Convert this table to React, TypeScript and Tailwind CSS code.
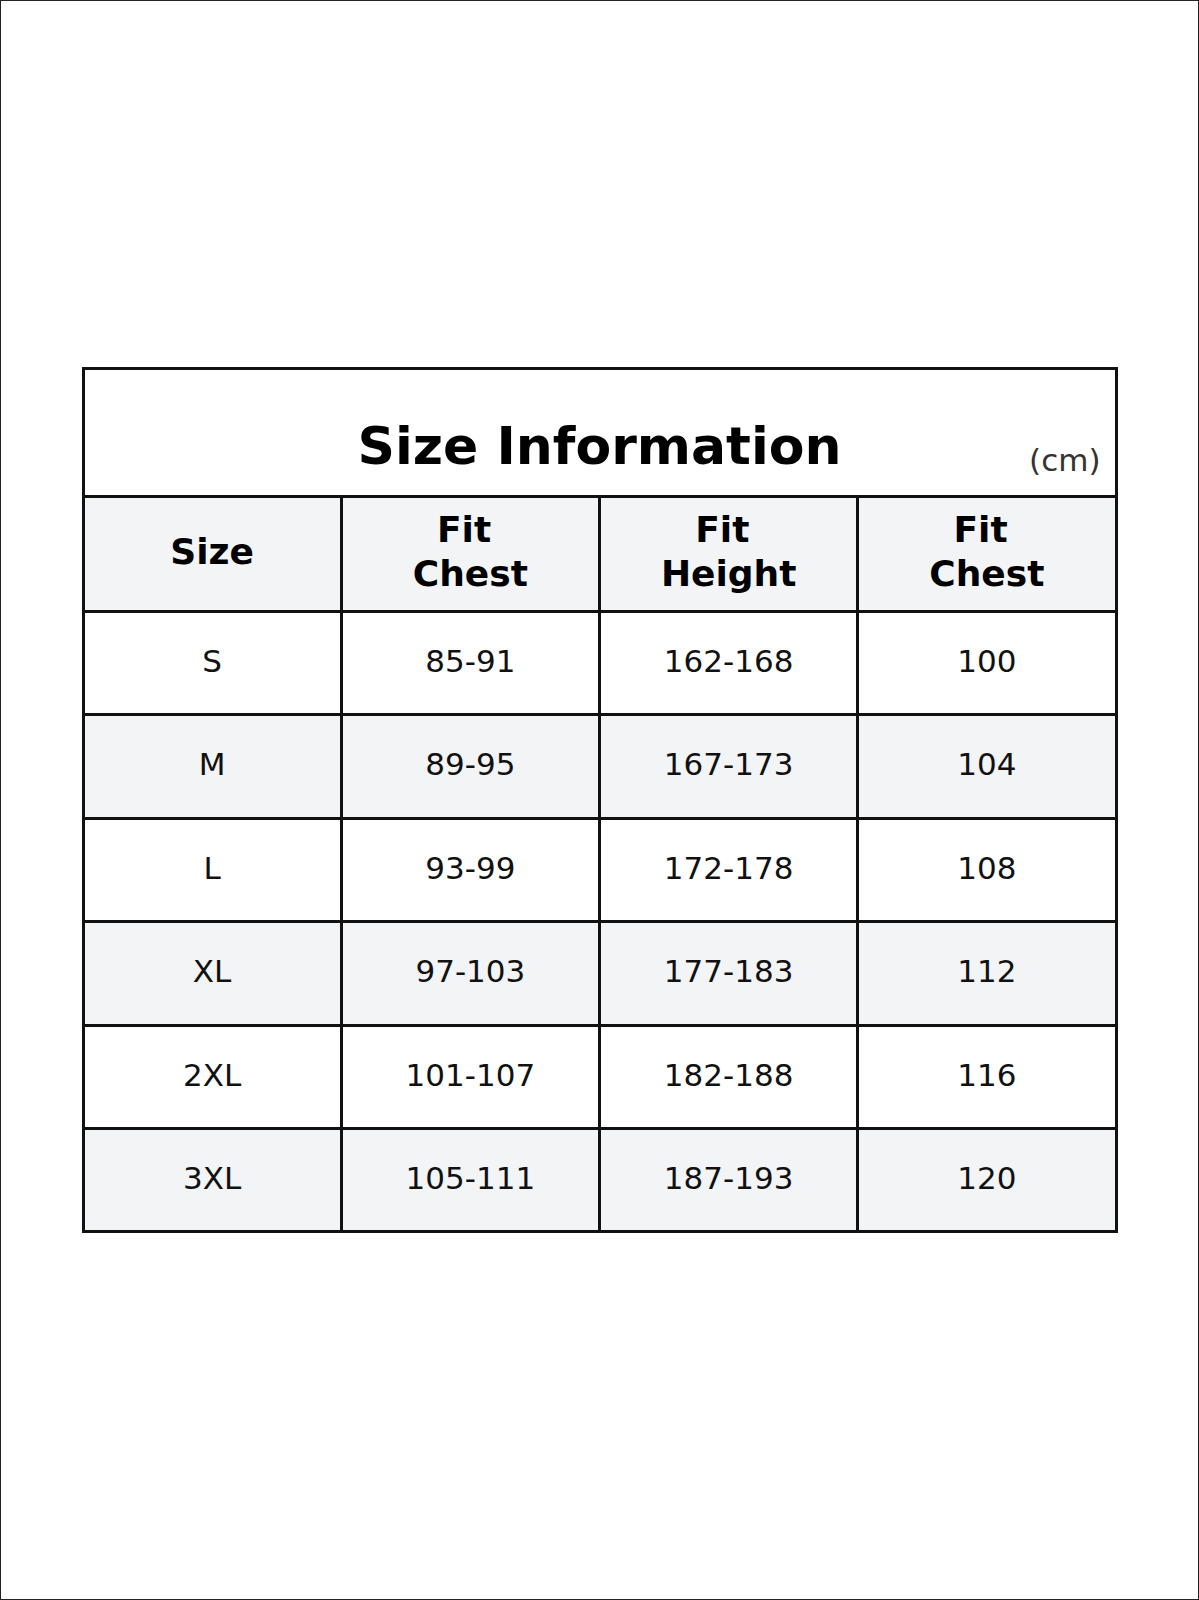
import React from "react";

const rows: [string, string, string, string][] = [
  ["S", "85-91", "162-168", "100"],
  ["M", "89-95", "167-173", "104"],
  ["L", "93-99", "172-178", "108"],
  ["XL", "97-103", "177-183", "112"],
  ["2XL", "101-107", "182-188", "116"],
  ["3XL", "105-111", "187-193", "120"],
];

export default function App() {
  return (
    <div
      className="w-[1199px] h-[1600px] bg-white border border-[#222] flex items-center justify-center text-[#111]"
      style={{ fontFamily: '"DejaVu Sans", Verdana, sans-serif' }}
    >
      <div className="w-[1036px] border-[3px] border-[#111] bg-white">
        <div className="relative h-[128px] border-b-[3px] border-[#111] flex items-center justify-center pt-[26px]">
          <h1 className="text-[52px] font-bold leading-normal text-black">Size Information</h1>
          <span className="absolute right-[14px] bottom-[12px] text-[31px] leading-normal text-[#333]">(cm)</span>
        </div>
        <div className="grid grid-cols-[258.25px_258.25px_258.25px_1fr] h-[115px] border-b-[3px] border-[#111] bg-[#f3f4f6] font-bold text-[36px] leading-[44px] text-black">
          <div className="border-r-[3px] border-[#111] flex items-center justify-center text-center pb-[5px]">Size</div>
          <div className="border-r-[3px] border-[#111] flex items-center justify-center text-center pb-[5px]">
            <span>Fit{"\u00a0"}<br />Chest</span>
          </div>
          <div className="border-r-[3px] border-[#111] flex items-center justify-center text-center pb-[5px]">
            <span>Fit{"\u00a0"}<br />Height</span>
          </div>
          <div className="flex items-center justify-center text-center pb-[5px]">
            <span>Fit{"\u00a0"}<br />Chest</span>
          </div>
        </div>
        {rows.map((r, i) => (
          <div
            key={r[0]}
            className={
              "grid grid-cols-[258.25px_258.25px_258.25px_1fr] text-[31px] " +
              (i % 2 === 1 ? "bg-[#f3f4f6] " : "bg-white ") +
              (i < rows.length - 1 ? "h-[103.4px] border-b-[3px] border-[#111]" : "h-[100px]")
            }
          >
            {r.map((c, j) => (
              <div
                key={j}
                className={
                  "flex items-center justify-center pb-[4px] " +
                  (j < 3 ? "border-r-[3px] border-[#111]" : "")
                }
              >
                {c}
              </div>
            ))}
          </div>
        ))}
      </div>
    </div>
  );
}
